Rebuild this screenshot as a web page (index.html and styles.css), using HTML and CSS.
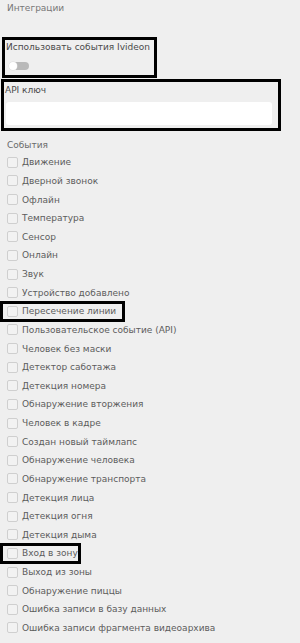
FILE: index.html
```html
<!DOCTYPE html>
<html lang="ru">
<head>
<meta charset="utf-8">
<link rel="stylesheet" href="styles.css">
</head>
<body>
<div class="page">
  <div class="title">Интеграции</div>
  <div class="box box1">
    <div class="label">Использовать события Ivideon</div>
    <div class="toggle"><span class="knob"></span></div>
  </div>
  <div class="box box2">
    <div class="label">API ключ</div>
    <div class="input"></div>
  </div>
  <div class="section">События</div>
  <div class="list">
    <div class="row"><span class="cb"></span><span>Движение</span></div>
    <div class="row"><span class="cb"></span><span>Дверной звонок</span></div>
    <div class="row"><span class="cb"></span><span>Офлайн</span></div>
    <div class="row"><span class="cb"></span><span>Температура</span></div>
    <div class="row"><span class="cb"></span><span>Сенсор</span></div>
    <div class="row"><span class="cb"></span><span>Онлайн</span></div>
    <div class="row"><span class="cb"></span><span>Звук</span></div>
    <div class="row"><span class="cb"></span><span>Устройство добавлено</span></div>
    <div class="row hl hl-line"><span class="cb"></span><span>Пересечение линии</span></div>
    <div class="row"><span class="cb"></span><span>Пользовательское событие (API)</span></div>
    <div class="row"><span class="cb"></span><span>Человек без маски</span></div>
    <div class="row"><span class="cb"></span><span>Детектор саботажа</span></div>
    <div class="row"><span class="cb"></span><span>Детекция номера</span></div>
    <div class="row"><span class="cb"></span><span>Обнаружение вторжения</span></div>
    <div class="row"><span class="cb"></span><span>Человек в кадре</span></div>
    <div class="row"><span class="cb"></span><span>Создан новый таймлапс</span></div>
    <div class="row"><span class="cb"></span><span>Обнаружение человека</span></div>
    <div class="row"><span class="cb"></span><span>Обнаружение транспорта</span></div>
    <div class="row"><span class="cb"></span><span>Детекция лица</span></div>
    <div class="row"><span class="cb"></span><span>Детекция огня</span></div>
    <div class="row"><span class="cb"></span><span>Детекция дыма</span></div>
    <div class="row hl hl-zone"><span class="cb"></span><span>Вход в зону</span></div>
    <div class="row"><span class="cb"></span><span>Выход из зоны</span></div>
    <div class="row"><span class="cb"></span><span>Обнаружение пиццы</span></div>
    <div class="row"><span class="cb"></span><span>Ошибка записи в базу данных</span></div>
    <div class="row"><span class="cb"></span><span>Ошибка записи фрагмента видеоархива</span></div>
  </div>
</div>
</body>
</html>
```
FILE: styles.css
```css
html, body {
  margin: 0;
  padding: 0;
  background: #efefef;
}
body {
  font-family: "DejaVu Sans", "Noto Sans", sans-serif;
  font-size: 9px;
  color: #5c5c5c;
}
.page {
  width: 300px;
}
.title {
  height: 37px;
  line-height: 16px;
  padding-left: 7px;
  color: #777;
}
.box {
  border: 3px solid #000;
  box-sizing: border-box;
}
.box1 {
  margin-left: 2px;
  width: 155px;
  height: 41px;
  padding-left: 1px;
}
.label {
  line-height: 14px;
  color: #4a4a4a;
}
.box2 .label {
  line-height: 16px;
}
.toggle {
  margin: 8px 0 0 3px;
  width: 20px;
  height: 8px;
  border-radius: 4px;
  background: #b9b9b9;
  position: relative;
}
.knob {
  position: absolute;
  left: 0;
  top: 0;
  width: 8px;
  height: 8px;
  border-radius: 50%;
  background: #fff;
  box-shadow: 0 0 0 0.5px #ddd;
}
.box2 {
  margin: 1px 0 0 1px;
  width: 280px;
  height: 52px;
  padding-left: 1px;
}
.input {
  margin: 4px 0 0 1px;
  width: 266px;
  height: 23px;
  background: #fff;
  border-radius: 3px;
}
.section {
  margin-top: 6px;
  line-height: 16px;
  padding-left: 7px;
  color: #6a6a6a;
}
.list {
  display: flex;
  flex-direction: column;
}
.row {
  display: flex;
  align-items: center;
  height: 18.64px;
  padding-left: 7px;
  box-sizing: border-box;
}
.cb {
  width: 11px;
  height: 11px;
  box-sizing: border-box;
  border: 1px solid #cfcfcf;
  border-radius: 2px;
  background: #f2f2f2;
  margin-right: 4px;
  flex: none;
}
.hl {
  margin-left: 1px;
  padding-left: 6px;
  outline: 3px solid #000;
  outline-offset: -2px;
}
.hl-line {
  width: 123px;
}
.hl-zone {
  width: 79px;
}
```
